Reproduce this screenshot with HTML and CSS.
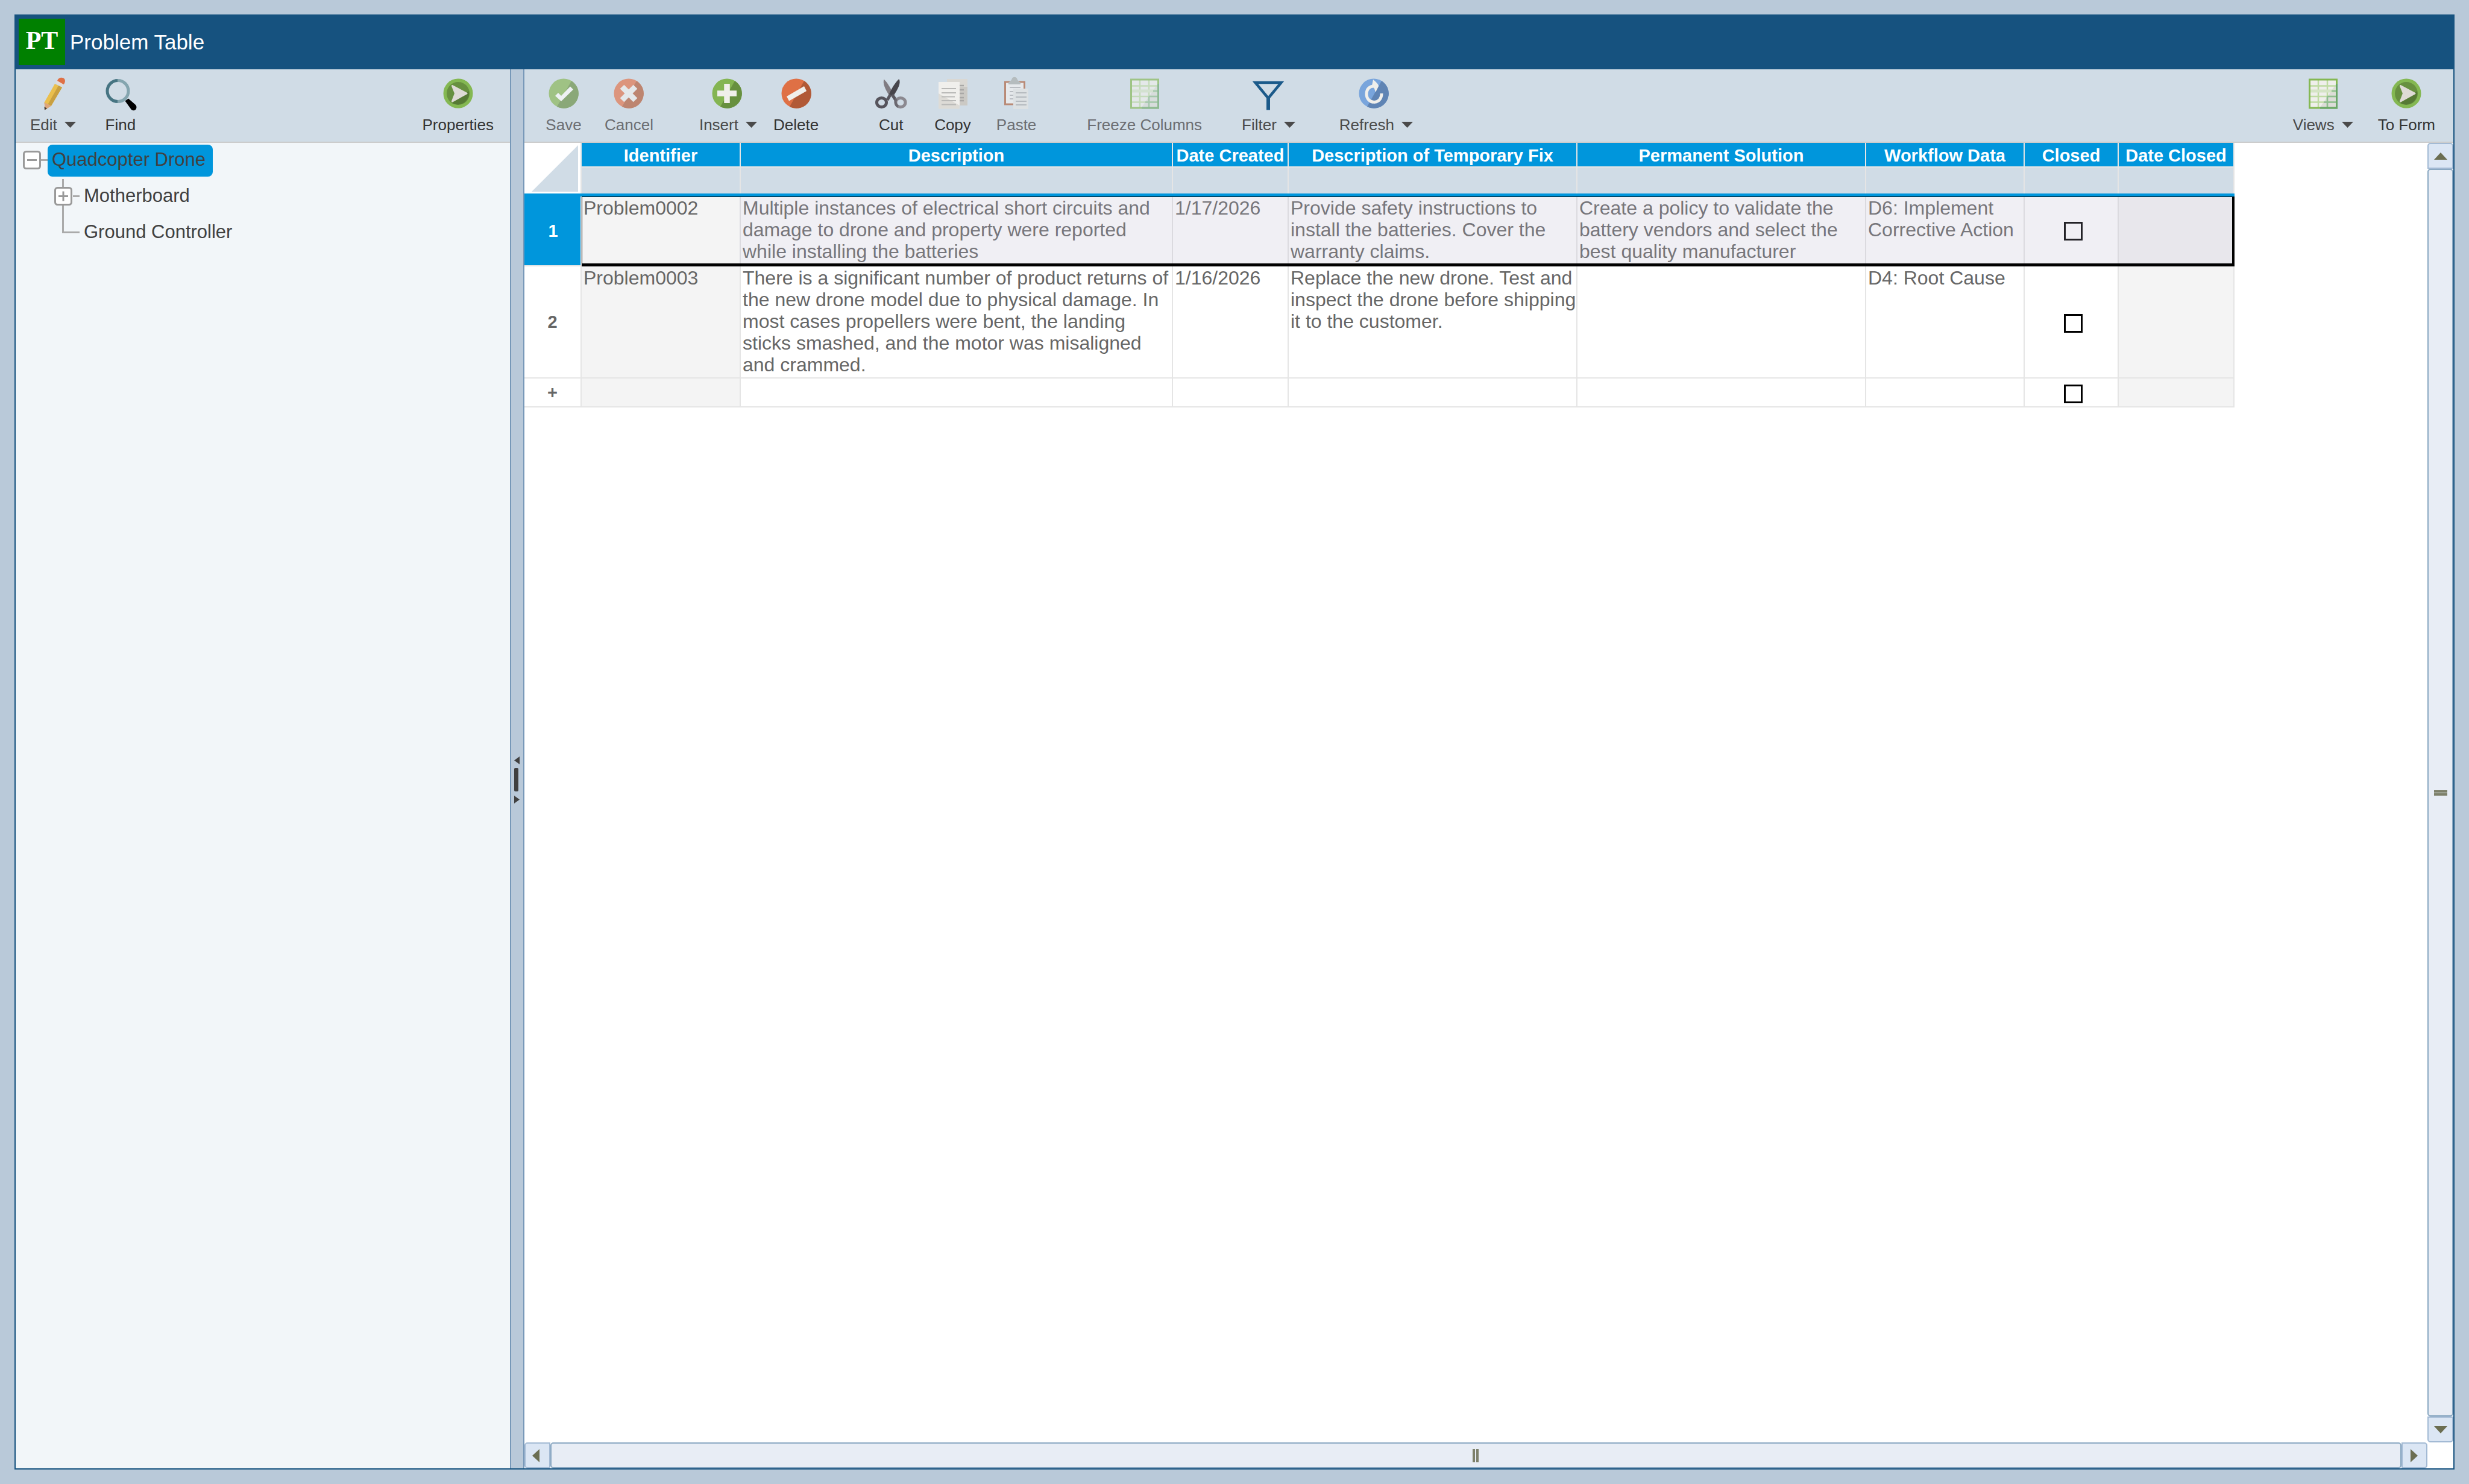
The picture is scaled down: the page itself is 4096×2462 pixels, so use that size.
FILE: index.html
```html
<!DOCTYPE html>
<html lang="en">
<head>
<meta charset="utf-8">
<title>Problem Table</title>
<link rel="stylesheet" href="styles.css">
</head>
<body>
<svg class="defs" aria-hidden="true">
  <symbol id="shade" viewBox="0 0 60 60"><path d="M43 9.2A24.5 24.5 0 0 1 19 51.9Z"/></symbol>
  <symbol id="go" viewBox="0 0 60 60">
    <circle cx="30" cy="30" r="24.5" fill="#84b852"/>
    <circle cx="30" cy="30" r="19" fill="#67903f"/>
    <path d="M48 26A19 19 0 0 1 20 46Z" fill="#567a35"/>
    <path d="M20.500 17.500L44 30L20.500 43L25.500 30Z" fill="#dedbd6" stroke="#dedbd6" stroke-width="3" stroke-linejoin="round"/>
  </symbol>
  <symbol id="grid" viewBox="0 0 60 60">
    <rect x="7.500" y="7" width="45" height="47" fill="#efefeb"/>
    <path d="M51 15V53H25Z" fill="#dcdcd8"/>
    <path d="M22 8V53M37 8V53M8 17.500H52M8 35H52M8 44.500H52" stroke="#bfdba3" stroke-width="2.500"/>
    <path d="M8 26H52" stroke="#d5e4c5" stroke-width="5"/>
    <path d="M37 35V53M37 35H52M31 44.500H52M44 26H52" stroke="#8fbd90" stroke-width="2.500"/>
    <rect x="7.500" y="7" width="45" height="47" fill="none" stroke="#84b852" stroke-width="3"/>
    <path d="M52.500 14V54H25" fill="none" stroke="#6aa768" stroke-width="3"/>
  </symbol>
  <symbol id="caret" viewBox="0 0 19 10"><path d="M0 0H19L9.500 10Z" fill="#4a4a4a"/></symbol>
</svg>

<div class="window">
  <header class="titlebar">
    <span class="logo">PT</span>
    <h1 class="title">Problem Table</h1>
  </header>

  <div class="panes">
    <aside class="side">
      <div class="toolbar side-toolbar">
        <div class="group">
          <button class="tool menu" type="button">
            <svg class="icon" viewBox="0 0 60 60"><path d="M15.500 45L33 14L45 20L27 50.500L17 57Z" fill="#eabf4d"/><path d="M39 17L45 20L27 50.500L21.500 48Z" fill="#c9a040"/><path d="M15.500 45L27 50.500L17 57Z" fill="#dda57c"/><path d="M15.500 52L20 55L16 57.500Z" fill="#40362f"/><path d="M34 12.500L37 8.500L47.500 14L45 18.500Z" fill="#e2dcda"/><path d="M37 9C39 3 46 2.500 49 6C51 9 49.500 13 47.500 15Z" fill="#df7045"/></svg>
            <span class="label">Edit<svg class="caret"><use href="#caret"/></svg></span>
          </button>
          <button class="tool find" type="button">
            <svg class="icon" viewBox="0 0 60 60"><path d="M25.500 8.500A17.500 17.500 0 0 0 25.500 43.500" fill="none" stroke="#467482" stroke-width="5"/><path d="M25.500 8.500A17.500 17.500 0 0 1 25.500 43.500" fill="none" stroke="#84a5af" stroke-width="5"/><path d="M37.500 42.500L43 38.500L55 49C59 54 54 61 48 57Z" fill="#000"/></svg>
            <span class="label">Find</span>
          </button>
        </div>
        <div class="group end">
          <button class="tool" type="button">
            <svg class="icon"><use href="#go"/></svg>
            <span class="label">Properties</span>
          </button>
        </div>
      </div>
      <ul class="tree">
        <li>
          <div class="node">
            <button class="toggle" type="button" aria-label="Collapse Quadcopter Drone"><svg viewBox="0 0 53 60"><path d="M42 28.500H53" class="line"/><rect x="13.500" y="14.500" width="27" height="28" rx="4" class="box"/><path d="M19 28.500H35" class="sign"/></svg></button>
            <a class="name current" href="#quadcopter">Quadcopter Drone</a>
          </div>
          <ul>
            <li>
              <div class="node">
                <button class="toggle" type="button" aria-label="Expand Motherboard"><svg viewBox="0 0 53 60"><path d="M25.500 0V60M42 28.500H53" class="line"/><rect x="12.500" y="14.500" width="27" height="28" rx="4" class="box"/><path d="M18 28.500H34M26 20.500V36.500" class="sign"/></svg></button>
                <a class="name" href="#motherboard">Motherboard</a>
              </div>
            </li>
            <li>
              <div class="node">
                <span class="toggle"><svg viewBox="0 0 53 60"><path d="M25.500 0V28.500H53" class="line"/></svg></span>
                <a class="name" href="#ground-controller">Ground Controller</a>
              </div>
            </li>
          </ul>
        </li>
      </ul>
    </aside>

    <div class="splitter">
      <svg class="grip" viewBox="0 0 20 80"><path d="M14 1V14L5 7.500ZM5 66V79L14 72.500Z"/><rect x="5" y="20" width="7" height="39" rx="2"/></svg>
    </div>

    <main class="main">
      <div class="toolbar main-toolbar">
        <div class="group">
          <button class="tool" type="button" disabled>
            <svg class="icon" viewBox="0 0 60 60"><circle cx="30" cy="30" r="24.500" fill="#9fc284"/><use href="#shade" fill="#8aa878"/><path d="M16 34L21 29L26 34L41 18.500L46 23.500L26 43Z" fill="#eef1f4"/></svg>
            <span class="label">Save</span>
          </button>
          <button class="tool" type="button" disabled>
            <svg class="icon" viewBox="0 0 60 60"><circle cx="30" cy="30" r="24.500" fill="#dc957d"/><use href="#shade" fill="#bd8570"/><path d="M19 19L41 41M41 19L19 41" stroke="#e4e8ea" stroke-width="9.500"/></svg>
            <span class="label">Cancel</span>
          </button>
        </div>
        <div class="group space-m">
          <button class="tool menu" type="button">
            <svg class="icon" viewBox="0 0 60 60"><circle cx="28" cy="30" r="24.500" fill="#84b552"/><use href="#shade" x="-2" fill="#67903f"/><path d="M12 30H44M28 14V46" stroke="#f0efeb" stroke-width="9.500"/></svg>
            <span class="label">Insert<svg class="caret"><use href="#caret"/></svg></span>
          </button>
          <button class="tool" type="button">
            <svg class="icon" viewBox="0 0 60 60"><circle cx="30" cy="30" r="24.500" fill="#df7045"/><use href="#shade" fill="#b15936"/><path d="M14 35L43 18L47 26L18 42.500Z" fill="#f0efeb"/></svg>
            <span class="label">Delete</span>
          </button>
        </div>
        <div class="group space-xl tight">
          <button class="tool" type="button">
            <svg class="icon" viewBox="0 0 60 60"><path d="M18.500 6.500C16 13 20 23 29 36L34 31C29 20 24 12 18.500 6.500Z" fill="#807c82"/><path d="M43.500 6C47 13 42 22 33 36L27 31C32 20 38 11 43.500 6Z" fill="#47454b"/><path d="M29 32L24 41M32 32L38 41" stroke="#5a5860" stroke-width="5"/><ellipse cx="14.500" cy="45" rx="8" ry="7.500" fill="none" stroke="#56545c" stroke-width="5"/><ellipse cx="46" cy="45" rx="8" ry="7.500" fill="none" stroke="#8b8990" stroke-width="5"/><path d="M39 39C36 43 38 50 42 52" fill="none" stroke="#6a6870" stroke-width="4"/></svg>
            <span class="label">Cut</span>
          </button>
          <button class="tool" type="button">
            <svg class="icon" viewBox="0 0 60 60"><rect x="21" y="6" width="34" height="44" fill="#dad8d3"/><path d="M42 19H55V50H42Z" fill="#cbc9c4"/><path d="M42 17H49M42 24H49M42 30H49M42 37H49M42 42H49" stroke="#a9a8a6" stroke-width="2.500"/><path d="M7 11H42V55.500H7Z" fill="#dddbd6"/><path d="M7 11H42V50L7 30Z" fill="#f0efec"/><path d="M12 22H36M12 29H36M12 35.500H34M12 42H36M12 48.500H36" stroke="#b9b9b7" stroke-width="2"/></svg>
            <span class="label">Copy</span>
          </button>
          <button class="tool" type="button" disabled>
            <svg class="icon" viewBox="0 0 60 60"><rect x="11.500" y="11" width="32" height="37" fill="#e6e9ec" stroke="#b98a76" stroke-width="3"/><path d="M17 15V12C19 10 22 9 23 5C25 2 29 2 31 5C32 9 35 10 37 12V15Z" fill="#b5bcbe"/><path d="M19 20H37M19 27H26M19 33H26M19 39H26" stroke="#b9bdc2" stroke-width="2"/><rect x="25" y="22" width="25" height="34" fill="#dde1e3"/><path d="M29 29H47M29 36H47M29 43H47M29 49H47" stroke="#b5babf" stroke-width="2"/></svg>
            <span class="label">Paste</span>
          </button>
        </div>
        <div class="group space-l">
          <button class="tool" type="button" disabled>
            <svg class="icon faded"><use href="#grid"/></svg>
            <span class="label">Freeze Columns</span>
          </button>
        </div>
        <div class="group space-s">
          <button class="tool menu" type="button">
            <svg class="icon" viewBox="0 0 60 60"><path d="M8.500 12H51.500L30 38Z" fill="none" stroke="#1b5a8a" stroke-width="4.500"/><path d="M30 36V57.500" stroke="#1b5a8a" stroke-width="6"/></svg>
            <span class="label">Filter<svg class="caret"><use href="#caret"/></svg></span>
          </button>
        </div>
        <div class="group space-l">
          <button class="tool menu" type="button">
            <svg class="icon" viewBox="4 0 60 60"><circle cx="30" cy="30" r="24.500" fill="#79a5dc"/><path d="M43 9.200A24.500 24.500 0 0 1 19 51.900Z" fill="#5f84b4"/><path d="M43 30C43 50 18 48 18 31C18 22 24 18 30 18" fill="none" stroke="#f0efeb" stroke-width="5"/><path d="M29 7C34 11 38 15 38 18L33 28L31 22L27 17Z" fill="#f0efeb"/></svg>
            <span class="label">Refresh<svg class="caret"><use href="#caret"/></svg></span>
          </button>
        </div>
        <div class="group end">
          <button class="tool menu views" type="button">
            <svg class="icon"><use href="#grid"/></svg>
            <span class="label">Views<svg class="caret"><use href="#caret"/></svg></span>
          </button>
          <button class="tool" type="button">
            <svg class="icon"><use href="#go"/></svg>
            <span class="label">To Form</span>
          </button>
        </div>
      </div>

      <div class="viewport">
        <div class="sheet">
          <table class="data">
            <colgroup><col class="c-num"><col class="c-id"><col class="c-desc"><col class="c-date"><col class="c-text"><col class="c-text"><col class="c-flow"><col class="c-closed"><col class="c-date"></colgroup>
            <thead>
              <tr class="heads">
                <td class="corner" rowspan="2"><svg class="triangle" viewBox="0 0 77 77"><path d="M77 0V77H0Z" fill="#d0dce6"/></svg></td>
                <th scope="col">Identifier</th><th scope="col">Description</th><th scope="col">Date Created</th><th scope="col">Description of Temporary Fix</th><th scope="col">Permanent Solution</th><th scope="col">Workflow Data</th><th scope="col">Closed</th><th scope="col">Date Closed</th>
              </tr>
              <tr class="filters"><td></td><td></td><td></td><td></td><td></td><td></td><td></td><td></td></tr>
            </thead>
            <tbody>
              <tr class="selected">
                <th scope="row">1</th>
                <td class="locked">Problem0002</td>
                <td>Multiple instances of electrical short circuits and damage to drone and property were reported while installing the batteries</td>
                <td>1/17/2026</td>
                <td>Provide safety instructions to install the batteries. Cover the warranty claims.</td>
                <td>Create a policy to validate the battery vendors and select the best quality manufacturer</td>
                <td>D6: Implement Corrective Action</td>
                <td class="check"><input type="checkbox" aria-label="Closed, row 1"></td>
                <td class="locked"></td>
              </tr>
              <tr class="second">
                <th scope="row">2</th>
                <td class="locked">Problem0003</td>
                <td>There is a significant number of product returns of the new drone model due to physical damage. In most cases propellers were bent, the landing sticks smashed, and the motor was misaligned and crammed.</td>
                <td>1/16/2026</td>
                <td>Replace the new drone. Test and inspect the drone before shipping it to the customer.</td>
                <td></td>
                <td>D4: Root Cause</td>
                <td class="check"><input type="checkbox" aria-label="Closed, row 2"></td>
                <td class="locked"></td>
              </tr>
              <tr class="new">
                <th scope="row">+</th>
                <td class="locked"></td><td></td><td></td><td></td><td></td><td></td>
                <td class="check"><input type="checkbox" aria-label="Closed, new row"></td>
                <td class="locked"></td>
              </tr>
            </tbody>
          </table>
        </div>
        <div class="scroll vertical">
          <button class="step up" type="button" aria-label="Scroll up"><svg viewBox="0 0 22 22"><path d="M0 17H22L11 5Z"/></svg></button>
          <div class="thumb"><svg viewBox="0 0 22 22"><path d="M0 7H22V11H0ZM0 12H22V16H0Z"/></svg></div>
          <button class="step down" type="button" aria-label="Scroll down"><svg viewBox="0 0 22 22"><path d="M0 5H22L11 17Z"/></svg></button>
        </div>
        <div class="scroll horizontal">
          <button class="step left" type="button" aria-label="Scroll left"><svg viewBox="0 0 22 22"><path d="M14 0V22L2 11Z"/></svg></button>
          <div class="thumb"><svg viewBox="0 0 22 22"><path d="M5 0V22H9V0ZM11 0V22H15V0Z"/></svg></div>
          <button class="step right" type="button" aria-label="Scroll right"><svg viewBox="0 0 22 22"><path d="M4 0V22L16 11Z"/></svg></button>
        </div>
      </div>
    </main>
  </div>
</div>
</body>
</html>
```
FILE: styles.css
```css
* { box-sizing: border-box; }

:root {
  --navy: #16527f;
  --blue: #0096dc;
  --bar: #d0dce6;
  --line: #e5e5e5;
  --frame: #b9c9d9;
}

body {
  margin: 0;
  min-height: 100vh;
  padding: 24px;
  display: flex;
  background: var(--frame);
  font-family: "Liberation Sans", Arial, sans-serif;
}

button {
  margin: 0;
  padding: 0;
  border: 0;
  background: none;
  font: inherit;
  color: inherit;
}

svg { display: block; flex: none; }
.defs { position: absolute; width: 0; height: 0; }

.window {
  flex: 1;
  display: flex;
  flex-direction: column;
  border: 2px solid var(--navy);
  background: #fff;
}

.titlebar {
  display: flex;
  gap: 8px;
  padding: 5px 5px 7px;
  background: var(--navy);
  color: #fff;
}

.logo {
  width: 77px;
  padding-bottom: 5px;
  background: #008000;
  font: bold 42px/72px "Liberation Serif", "Times New Roman", serif;
  text-align: center;
}

.title {
  margin: 0;
  font-size: 35px;
  font-weight: normal;
  line-height: 77px;
}

.panes { flex: 1; display: flex; }
.side { flex: 0 0 820px; background: #f2f6f9; }
.main { flex: 1; min-width: 0; display: flex; flex-direction: column; }

/* Toolbars */
.toolbar {
  display: flex;
  padding: 10px 8px 13px;
  border-bottom: 2px solid #ccc;
  background: var(--bar);
}

.side-toolbar { padding-left: 5px; }
.main-toolbar { padding-left: 16px; padding-right: 11px; }
.group { display: flex; }
.space-s { margin-left: 28px; }
.space-m { margin-left: 38px; }
.space-l { margin-left: 46px; }
.space-xl { margin-left: 52px; }
.tight { gap: 4px; }
.end { margin-left: auto; }

.tool {
  display: flex;
  flex-direction: column;
  align-items: center;
  gap: 7px;
  padding: 0 19px;
  color: #333;
}

.tool:disabled { color: #6c6e72; }
.menu { padding-right: 8px; color: #4a4a4a; }
.find { margin-left: 17px; }
.views { margin-right: 14px; }
.icon { width: 60px; height: 60px; }
.faded { opacity: .65; }

.label {
  display: flex;
  align-items: center;
  gap: 12px;
  font-size: 26px;
  line-height: 30px;
  white-space: nowrap;
}

.caret { width: 19px; height: 10px; }

/* Tree */
.tree, .tree ul { margin: 0; padding: 0; list-style: none; }
.tree ul { padding-left: 53px; }
.node { display: flex; align-items: flex-start; height: 60px; }
.toggle, .toggle svg { width: 53px; height: 60px; }
.toggle .line { fill: none; stroke: #aaa; stroke-width: 3; }
.toggle .box { fill: #fff; stroke: #999; stroke-width: 3; }
.toggle .sign { stroke: #999; stroke-width: 3; }

.name {
  margin-top: 3px;
  padding: 0 12px 4px 7px;
  border-radius: 8px;
  font-size: 31px;
  line-height: 49px;
  color: #404040;
  text-decoration: none;
}

.current { background: var(--blue); }

.splitter {
  flex: 0 0 24px;
  display: flex;
  align-items: center;
  padding-top: 36px;
  border: solid #7798b8;
  border-width: 0 2px;
  background: var(--frame);
}

.grip { width: 20px; height: 80px; fill: #404040; }

/* Table */
.viewport {
  flex: 1;
  display: grid;
  grid-template: 1fr 43px / 1fr 43px;
}

.sheet { min-width: 0; overflow: hidden; }

.data {
  width: 2837px;
  table-layout: fixed;
  border-collapse: separate;
  border-spacing: 0;
  color: #666;
}

.c-num { width: 95px; }
.c-id { width: 264px; }
.c-desc { width: 717px; }
.c-date { width: 192px; }
.c-text { width: 479px; }
.c-flow { width: 263px; }
.c-closed { width: 156px; }

.data td, .data th {
  padding: 1px 0 1px 3px;
  border: solid var(--line);
  border-width: 0 2px 2px 0;
}

.data td {
  font-size: 32px;
  line-height: 36px;
  vertical-align: top;
}

.data th {
  padding-left: 0;
  font-size: 29px;
  line-height: 36px;
  text-align: center;
  vertical-align: middle;
}

.heads { height: 41px; }
.heads th { padding: 2px 0 0; background: var(--blue); color: #fff; white-space: nowrap; }
.data .corner { padding: 4px 5px 3px 12px; border-bottom: 0; }
.triangle { width: 77px; height: 77px; }
.filters { height: 43px; }
.data .filters td { border-bottom: 0; background: var(--bar); }
.data .locked { background: #f4f4f4; }
.data .check { padding: 4px 0 0 6px; text-align: center; vertical-align: middle; line-height: 0; }

.check input {
  appearance: none;
  width: 31px;
  height: 31px;
  margin: 0;
  border: 3px solid #000;
}

.selected { height: 121px; }
.second { height: 186px; }
.new { height: 48px; }

/* The selected row draws its column lines as shadows so that the blue and black edges stay unbroken. */
.data .selected td {
  padding-right: 2px;
  border-width: 5px 0;
  border-color: var(--blue) transparent #000;
  background: #f0eff4;
  box-shadow: inset 0 1px #000, inset -2px 0 #dbdadf;
  color: #77767b;
}

.data .selected th {
  border-width: 5px 0 2px;
  border-top-color: var(--blue);
  background: var(--blue);
  box-shadow: inset -2px 0 var(--line);
  color: #fff;
}

.data .selected .locked {
  background: #f4f4f4;
  box-shadow: inset 0 1px #000, inset 1px 0 #000, inset -2px 0 #dbdadf;
  color: #666;
}

.data .selected .locked:last-child {
  background: #e8e7ec;
  box-shadow: inset 0 1px #000, inset -4px 0 #000;
}

.selected input { border-color: #232227; }

/* Scroll bars */
.scroll { display: flex; }
.vertical { flex-direction: column; }
.step, .thumb { display: flex; align-items: center; justify-content: center; }

.step {
  flex: 0 0 43px;
  border: 2px solid #a3bad4;
  background: #dbe6f4;
}

.thumb {
  flex: 1;
  border: 2px solid #8aa8c2;
  border-radius: 5px;
  background: #e8edf5;
}

.scroll svg { width: 22px; height: 22px; fill: #6b6e52; }
.thumb svg { opacity: .85; }
.up { border-radius: 5px 5px 0 0; }
.down { border-radius: 0 0 5px 5px; }
.left { border-radius: 5px 0 0 5px; }
.right { border-radius: 0 5px 5px 0; }
```
